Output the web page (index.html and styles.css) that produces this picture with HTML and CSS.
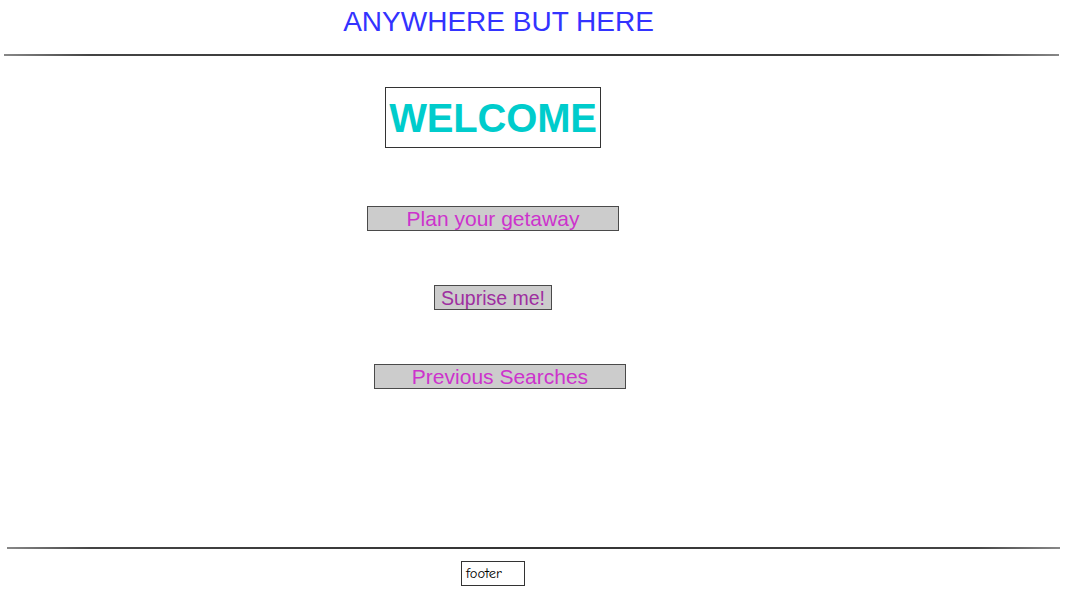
FILE: index.html
```html
<!DOCTYPE html>
<html lang="en">
<head>
<meta charset="utf-8">
<title>Anywhere But Here</title>
<link rel="stylesheet" href="styles.css">
</head>
<body>
<div class="page">
  <header class="header">
    <h1 class="title">ANYWHERE BUT HERE</h1>
  </header>
  <div class="rule rule-top"></div>
  <main class="main">
    <div class="welcome">WELCOME</div>
    <button class="btn btn-plan">Plan your getaway</button>
    <button class="btn btn-surprise">Suprise me!</button>
    <button class="btn btn-previous">Previous Searches</button>
  </main>
  <div class="rule rule-bottom"></div>
  <footer class="footer">
    <div class="footer-box">footer</div>
  </footer>
</div>
</body>
</html>
```

FILE: styles.css
```css
html, body {
  margin: 0;
  padding: 0;
  background: #ffffff;
}

body {
  font-family: "Liberation Sans", Arial, Helvetica, sans-serif;
  width: 1065px;
  height: 598px;
  overflow: hidden;
}

.page {
  display: flex;
  flex-direction: column;
  height: 598px;
}

.header {
  height: 54px;
  box-sizing: border-box;
  display: flex;
  justify-content: center;
  padding-right: 68px;
  padding-top: 6px;
}

.title {
  margin: 0;
  font-size: 28px;
  line-height: 32px;
  font-weight: normal;
  color: #3333ff;
}

.rule {
  height: 2px;
  background: linear-gradient(90deg, #888 0%, #444 8%, #333 50%, #444 92%, #888 100%);
}

.rule-top {
  margin: 0 6px 0 4px;
}

.rule-bottom {
  margin: 0 5px 0 7px;
}

.main {
  height: 491px;
  display: flex;
  flex-direction: column;
  align-items: center;
  padding-right: 79px;
}

.welcome {
  margin-top: 31px;
  width: 216px;
  height: 61px;
  box-sizing: border-box;
  border: 1px solid #333;
  display: flex;
  align-items: center;
  justify-content: center;
  font-size: 40px;
  font-weight: bold;
  color: #00cccc;
  letter-spacing: -0.2px;
  padding-top: 1px;
}

.btn {
  height: 25px;
  box-sizing: border-box;
  border: 1px solid #4a4a4a;
  background: #cccccc;
  font-family: "Liberation Sans", Arial, Helvetica, sans-serif;
  font-size: 21px;
  line-height: 22px;
  padding: 0;
  color: #cc33cc;
  text-align: center;
}

.btn-plan {
  margin-top: 58px;
  width: 252px;
}

.btn-surprise {
  margin-top: 54px;
  width: 118px;
  font-size: 19.5px;
  color: #9e2fa0;
}

.btn-previous {
  margin-top: 54px;
  width: 252px;
  margin-left: 14px;
}

.footer {
  flex: 1;
  display: flex;
  justify-content: center;
  align-items: flex-start;
  padding-right: 79px;
}

.footer-box {
  margin-top: 12px;
  width: 64px;
  height: 25px;
  box-sizing: border-box;
  border: 1px solid #333;
  font-family: "Comic Sans MS", "Comic Neue", "DejaVu Sans", sans-serif;
  font-size: 14.5px;
  line-height: 24px;
  padding-left: 4px;
  color: #000;
}
```
